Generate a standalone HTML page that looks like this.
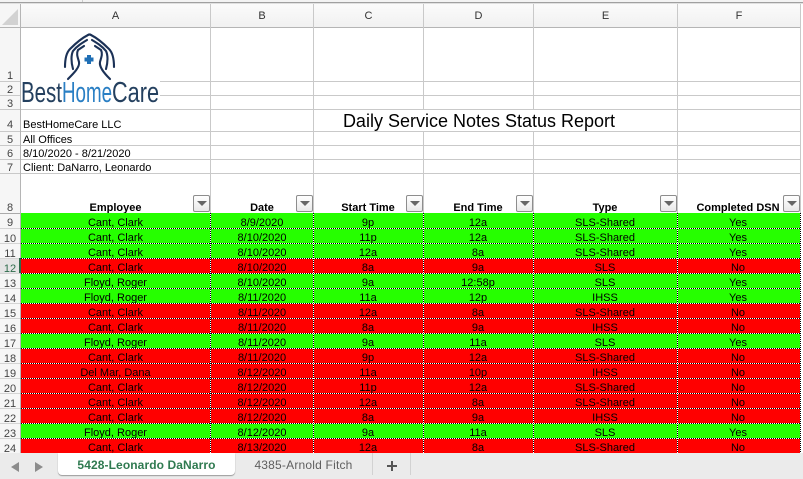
<!DOCTYPE html>
<html>
<head>
<meta charset="utf-8">
<style>
html,body{margin:0;padding:0;width:803px;height:479px;overflow:hidden;background:#fff}
body{position:relative;font-family:"Liberation Sans",sans-serif;font-size:11px;color:#000}
div,span{box-sizing:border-box}
.a{position:absolute}
.h{position:absolute;background:#c9c9c9}
.ch{position:absolute;top:4px;height:23px;line-height:24px;text-align:center;font-size:11px;color:#333;background:linear-gradient(#fbfbfb,#f1f1f1);border-right:1px solid #d4d4d4}
.n{position:absolute;left:0;width:20px;text-align:center;color:#444;font-size:11px;line-height:15px;height:15px}
.t{position:absolute;left:23px;line-height:14px;white-space:nowrap}
.b{position:absolute;top:201px;font-weight:bold;font-size:11px;line-height:15px;text-align:center;white-space:nowrap}
.f{position:absolute;top:195px;width:17px;height:17px;border:1px solid #8d8d8d;border-radius:2px;background:linear-gradient(#fff,#e9e9e9)}
.f:after{content:"";position:absolute;left:3px;top:5px;border-left:5px solid transparent;border-right:5px solid transparent;border-top:5px solid #666}
.r{position:absolute;left:21px;width:780px;height:15px;line-height:15px;font-size:11px}
.g{background:#26ff00}.x{background:#ff0000}
.r span{position:absolute;top:3px;text-align:center;white-space:nowrap;color:#000}
.r span:nth-child(1){left:0;width:189px}
.r span:nth-child(2){left:190px;width:102px}
.r span:nth-child(3){left:293px;width:108px}
.r span:nth-child(4){left:403px;width:108px}
.r span:nth-child(5){left:513px;width:142px}
.r span:nth-child(6){left:657px;width:120px}
.dh{position:absolute;left:21px;width:780px;height:1px;background:repeating-linear-gradient(90deg,#000 0 1px,#fff 1px 2px)}
.dv{position:absolute;top:213px;height:240px;width:1px;background:repeating-linear-gradient(#000 0 1px,#fff 1px 2px)}
</style>
</head>
<body>
<!-- top chrome -->
<div class="a" style="left:0;top:0;width:803px;height:2px;background:#f3f3f3"></div>
<div class="a" style="left:82px;top:0;width:1px;height:2px;background:#ccc"></div>
<div class="a" style="left:0;top:2px;width:803px;height:1px;background:#a0a0a0"></div>
<div class="a" style="left:0;top:3px;width:803px;height:1px;background:#e0e0e0"></div>

<!-- column headers -->
<div class="a" style="left:0;top:4px;width:20px;height:23px;background:#f6f6f6"></div>
<div class="a" style="left:2px;top:9px;width:0;height:0;border-left:16px solid transparent;border-bottom:16px solid #d2d2d2"></div>
<div class="ch" style="left:21px;width:190px">A</div>
<div class="ch" style="left:211px;width:103px">B</div>
<div class="ch" style="left:314px;width:110px">C</div>
<div class="ch" style="left:424px;width:110px">D</div>
<div class="ch" style="left:534px;width:144px">E</div>
<div class="ch" style="left:678px;width:123px">F</div>

<!-- row header column -->
<div class="a" style="left:0;top:27px;width:20px;height:426px;background:#f6f6f6"></div>
<div class="a" style="left:0;top:258px;width:20px;height:15px;background:#e4e4e4"></div>

<!-- horizontal gridlines -->
<div class="h" style="left:0;top:27px;width:801px;height:1px;background:#b5b5b5"></div>
<div class="h" style="left:0;top:81px;width:801px;height:1px"></div>
<div class="h" style="left:0;top:95px;width:801px;height:1px"></div>
<div class="h" style="left:0;top:109px;width:801px;height:1px"></div>
<div class="h" style="left:0;top:131px;width:801px;height:1px"></div>
<div class="h" style="left:0;top:145px;width:801px;height:1px"></div>
<div class="h" style="left:0;top:159px;width:801px;height:1px"></div>
<div class="h" style="left:0;top:173px;width:801px;height:1px"></div>
<div class="h" style="left:0;top:213px;width:801px;height:1px;background:#aaa"></div>
<div class="h" style="left:0;top:228px;width:20px;height:1px;background:#d4d4d4"></div>
<div class="h" style="left:0;top:243px;width:20px;height:1px;background:#d4d4d4"></div>
<div class="h" style="left:0;top:258px;width:20px;height:1px;background:#d4d4d4"></div>
<div class="h" style="left:0;top:273px;width:20px;height:1px;background:#d4d4d4"></div>
<div class="h" style="left:0;top:288px;width:20px;height:1px;background:#d4d4d4"></div>
<div class="h" style="left:0;top:303px;width:20px;height:1px;background:#d4d4d4"></div>
<div class="h" style="left:0;top:318px;width:20px;height:1px;background:#d4d4d4"></div>
<div class="h" style="left:0;top:333px;width:20px;height:1px;background:#d4d4d4"></div>
<div class="h" style="left:0;top:348px;width:20px;height:1px;background:#d4d4d4"></div>
<div class="h" style="left:0;top:363px;width:20px;height:1px;background:#d4d4d4"></div>
<div class="h" style="left:0;top:378px;width:20px;height:1px;background:#d4d4d4"></div>
<div class="h" style="left:0;top:393px;width:20px;height:1px;background:#d4d4d4"></div>
<div class="h" style="left:0;top:408px;width:20px;height:1px;background:#d4d4d4"></div>
<div class="h" style="left:0;top:423px;width:20px;height:1px;background:#d4d4d4"></div>
<div class="h" style="left:0;top:438px;width:20px;height:1px;background:#d4d4d4"></div>
<!-- vertical gridlines -->
<div class="h" style="left:20px;top:4px;width:1px;height:449px;background:#b5b5b5"></div>
<div class="h" style="left:210px;top:4px;width:1px;height:209px"></div>
<div class="h" style="left:313px;top:4px;width:1px;height:209px"></div>
<div class="h" style="left:423px;top:4px;width:1px;height:209px"></div>
<div class="h" style="left:533px;top:4px;width:1px;height:209px"></div>
<div class="h" style="left:677px;top:4px;width:1px;height:209px"></div>
<div class="h" style="left:800px;top:4px;width:1px;height:209px"></div>

<!-- row numbers -->
<div class="n" style="top:69px">1</div>
<div class="n" style="top:83px">2</div>
<div class="n" style="top:97px">3</div>
<div class="n" style="top:118px">4</div>
<div class="n" style="top:133px">5</div>
<div class="n" style="top:147px">6</div>
<div class="n" style="top:161px">7</div>
<div class="n" style="top:201px">8</div>
<div class="n" style="top:216px">9</div>
<div class="n" style="top:232px">10</div>
<div class="n" style="top:247px">11</div>
<div class="n" style="top:262px;color:#2d6b4b">12</div>
<div class="n" style="top:277px">13</div>
<div class="n" style="top:292px">14</div>
<div class="n" style="top:307px">15</div>
<div class="n" style="top:322px">16</div>
<div class="n" style="top:337px">17</div>
<div class="n" style="top:352px">18</div>
<div class="n" style="top:367px">19</div>
<div class="n" style="top:382px">20</div>
<div class="n" style="top:397px">21</div>
<div class="n" style="top:412px">22</div>
<div class="n" style="top:427px">23</div>
<div class="n" style="top:442px">24</div>
<div class="a" style="left:19px;top:258px;width:2px;height:15px;background:#2d6b4b"></div>

<!-- logo -->
<svg class="a" style="left:21px;top:28px" width="139" height="81" viewBox="21 28 139 81">
<rect x="21" y="28" width="139" height="81" fill="#fff"/>
<g fill="none" stroke="#1b3156" stroke-width="2.1" stroke-linecap="round" stroke-linejoin="round">
<path d="M88 35C82 38 75 44 70 49C66 53 65 60 65 67"/>
<path d="M87 40C82 43 77 46 73 51C71 55 71 62 73 69"/>
<path d="M84 46L78 50C76 54 78 58 79 62C80 67 74 73 68 79"/>
<path d="M91 35C97 38 104 44 109 49C113 53 114 60 114 67"/>
<path d="M92 40C97 43 102 46 106 51C108 55 108 62 106 69"/>
<path d="M95 46L101 50C103 54 101 58 100 62C99 67 104 73 110 79"/>
<path d="M88 35Q89.5 34 91 35"/>
</g>
<path d="M87 55h4v2.500h2.500v4H91V64h-4v-2.500h-2.500v-4H87z" fill="#1f6fb5"/>
<g font-family="Liberation Sans,sans-serif" font-size="29">
<text x="21" y="102" fill="#24405f" textLength="41" lengthAdjust="spacingAndGlyphs">Best</text>
<text x="62" y="102" fill="#2a7fc4" textLength="50" lengthAdjust="spacingAndGlyphs">Home</text>
<text x="112" y="102" fill="#24405f" textLength="47" lengthAdjust="spacingAndGlyphs">Care</text>
</g>
</svg>

<!-- info text -->
<div class="t" style="top:118px">BestHomeCare LLC</div>
<div class="t" style="top:133px">All Offices</div>
<div class="t" style="top:147px">8/10/2020 - 8/21/2020</div>
<div class="t" style="top:161px">Client: DaNarro, Leonardo</div>
<div class="a" style="left:314px;top:110px;width:330px;height:21px;line-height:23px;text-align:center;font-size:18px;background:#fff;white-space:nowrap">Daily Service Notes Status Report</div>

<!-- table header -->
<div class="b" style="left:21px;width:189px">Employee</div>
<div class="b" style="left:211px;width:102px">Date</div>
<div class="b" style="left:314px;width:108px">Start Time</div>
<div class="b" style="left:424px;width:108px">End Time</div>
<div class="b" style="left:534px;width:142px">Type</div>
<div class="b" style="left:678px;width:120px">Completed DSN</div>
<div class="f" style="left:193px"></div>
<div class="f" style="left:296px"></div>
<div class="f" style="left:406px"></div>
<div class="f" style="left:516px"></div>
<div class="f" style="left:660px"></div>
<div class="f" style="left:783px"></div>

<!-- rows -->
<div class="r g" style="top:213px"><span>Cant, Clark</span><span>8/9/2020</span><span>9p</span><span>12a</span><span>SLS-Shared</span><span>Yes</span></div>
<div class="r g" style="top:228px"><span>Cant, Clark</span><span>8/10/2020</span><span>11p</span><span>12a</span><span>SLS-Shared</span><span>Yes</span></div>
<div class="r g" style="top:243px"><span>Cant, Clark</span><span>8/10/2020</span><span>12a</span><span>8a</span><span>SLS-Shared</span><span>Yes</span></div>
<div class="r x" style="top:258px"><span>Cant, Clark</span><span>8/10/2020</span><span>8a</span><span>9a</span><span>SLS</span><span>No</span></div>
<div class="r g" style="top:273px"><span>Floyd, Roger</span><span>8/10/2020</span><span>9a</span><span>12:58p</span><span>SLS</span><span>Yes</span></div>
<div class="r g" style="top:288px"><span>Floyd, Roger</span><span>8/11/2020</span><span>11a</span><span>12p</span><span>IHSS</span><span>Yes</span></div>
<div class="r x" style="top:303px"><span>Cant, Clark</span><span>8/11/2020</span><span>12a</span><span>8a</span><span>SLS-Shared</span><span>No</span></div>
<div class="r x" style="top:318px"><span>Cant, Clark</span><span>8/11/2020</span><span>8a</span><span>9a</span><span>IHSS</span><span>No</span></div>
<div class="r g" style="top:333px"><span>Floyd, Roger</span><span>8/11/2020</span><span>9a</span><span>11a</span><span>SLS</span><span>Yes</span></div>
<div class="r x" style="top:348px"><span>Cant, Clark</span><span>8/11/2020</span><span>9p</span><span>12a</span><span>SLS-Shared</span><span>No</span></div>
<div class="r x" style="top:363px"><span>Del Mar, Dana</span><span>8/12/2020</span><span>11a</span><span>10p</span><span>IHSS</span><span>No</span></div>
<div class="r x" style="top:378px"><span>Cant, Clark</span><span>8/12/2020</span><span>11p</span><span>12a</span><span>SLS-Shared</span><span>No</span></div>
<div class="r x" style="top:393px"><span>Cant, Clark</span><span>8/12/2020</span><span>12a</span><span>8a</span><span>SLS-Shared</span><span>No</span></div>
<div class="r x" style="top:408px"><span>Cant, Clark</span><span>8/12/2020</span><span>8a</span><span>9a</span><span>IHSS</span><span>No</span></div>
<div class="r g" style="top:423px"><span>Floyd, Roger</span><span>8/12/2020</span><span>9a</span><span>11a</span><span>SLS</span><span>Yes</span></div>
<div class="r x" style="top:438px"><span>Cant, Clark</span><span>8/13/2020</span><span>12a</span><span>8a</span><span>SLS-Shared</span><span>No</span></div>

<!-- dotted borders -->
<div class="dh" style="top:228px"></div>
<div class="dh" style="top:243px"></div>
<div class="dh" style="top:258px"></div>
<div class="dh" style="top:273px"></div>
<div class="dh" style="top:288px"></div>
<div class="dh" style="top:303px"></div>
<div class="dh" style="top:318px"></div>
<div class="dh" style="top:333px"></div>
<div class="dh" style="top:348px"></div>
<div class="dh" style="top:363px"></div>
<div class="dh" style="top:378px"></div>
<div class="dh" style="top:393px"></div>
<div class="dh" style="top:408px"></div>
<div class="dh" style="top:423px"></div>
<div class="dh" style="top:438px"></div>
<div class="dv" style="left:210px"></div>
<div class="dv" style="left:313px"></div>
<div class="dv" style="left:423px"></div>
<div class="dv" style="left:533px"></div>
<div class="dv" style="left:677px"></div>
<div class="dv" style="left:800px"></div>

<!-- tab bar -->
<div class="a" style="left:0;top:453px;width:803px;height:26px;background:#ebebeb"></div>
<div class="a" style="left:11px;top:462px;width:0;height:0;border-top:5px solid transparent;border-bottom:5px solid transparent;border-right:8px solid #8c8c8c"></div>
<div class="a" style="left:35px;top:462px;width:0;height:0;border-top:5px solid transparent;border-bottom:5px solid transparent;border-left:8px solid #8c8c8c"></div>
<div class="a" style="left:58px;top:453px;width:177px;height:22px;background:#fff;border-radius:0 0 4px 4px;box-shadow:0 1px 1px #999;text-align:center;line-height:24px;font-weight:bold;font-size:12px;letter-spacing:.1px;color:#2f7a50;white-space:nowrap">5428-Leonardo DaNarro</div>
<div class="a" style="left:235px;top:453px;width:137px;height:22px;text-align:center;line-height:24px;font-size:12px;letter-spacing:.2px;color:#5f5f5f;white-space:nowrap">4385-Arnold Fitch</div>
<div class="a" style="left:372px;top:453px;width:1px;height:22px;background:#d2d2d2"></div>
<div class="a" style="left:410px;top:453px;width:1px;height:22px;background:#d2d2d2"></div>
<div class="a" style="left:387px;top:465px;width:10px;height:2px;background:#555"></div>
<div class="a" style="left:391px;top:461px;width:2px;height:10px;background:#555"></div>
</body>
</html>
